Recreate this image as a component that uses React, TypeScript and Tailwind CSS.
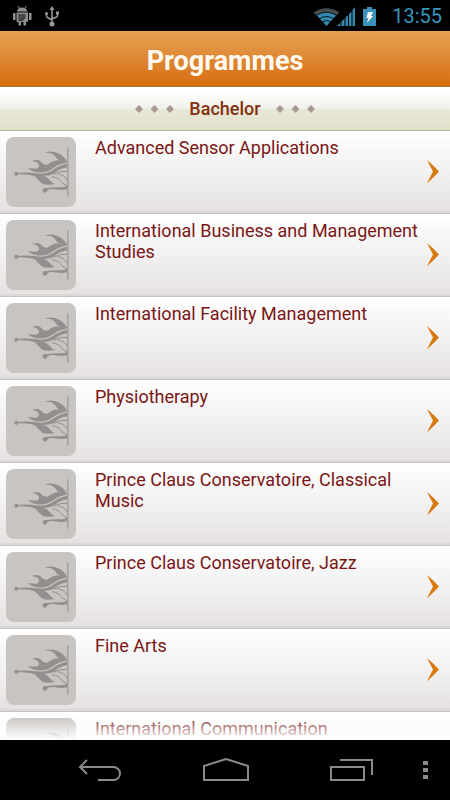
import React from "react";

const programmes = [
  "Advanced Sensor Applications",
  "International Business and Management Studies",
  "International Facility Management",
  "Physiotherapy",
  "Prince Claus Conservatoire, Classical Music",
  "Prince Claus Conservatoire, Jazz",
  "Fine Arts",
  "International Communication",
];

const StatusBar = () => (
  <div className="flex h-[31px] shrink-0 items-center justify-between bg-black pr-2 pl-3">
    <div className="flex items-center gap-3">
      <svg className="h-[22px] w-5" viewBox="0 0 20 22" fill="#8f8f8f">
        <path d="M5 6.500Q5.500 2.500 10 2.500T15.500 6.500ZM1 8h2.500v7H1ZM17 8h2.500v7H17ZM4.500 7.500h11.500v8q0 1.500-1.500 1.500H14v3.500h-2.500V17H9v3.500H6.500V17H6q-1.500 0-1.500-1.500Z" />
        <path d="m6 1 1.500 2M14.500 1 13 3" stroke="#8f8f8f" />
        <path d="M6.500 9h7v4l-3 3h-4Z" fill="#333" />
        <path d="M8 9.500v6M10 9.500v6M12 9.500v4" stroke="#8f8f8f" strokeDasharray="1 1" />
      </svg>
      <svg className="h-[22px] w-4" viewBox="0 0 16 22" fill="none" stroke="#9a9a9a" strokeWidth="1.500">
        <path d="M8 3v16M2.500 8.500V11q0 1 1 1.500L8 15M13.500 8v2.500q0 1-1 1.500L8 14" />
        <path d="m8 1 2.500 4h-5Z" fill="#9a9a9a" stroke="none" />
        <circle cx="8" cy="19" r="2.500" fill="#9a9a9a" stroke="none" />
        <circle cx="2.500" cy="8.500" r="1.500" fill="#9a9a9a" stroke="none" />
        <path d="M12 6.500h3v3h-3Z" fill="#9a9a9a" stroke="none" />
      </svg>
    </div>
    <div className="flex items-center">
      <svg className="h-[22px] w-[66px]" viewBox="0 -2 66 22">
        <path d="M0 5.500Q12.500-2.500 25 5.500L12.500 19Z" fill="#3488ad" />
        <path d="M0 5.500Q12.500-2.500 25 5.500L22.500 8.500Q12.500 2 2.500 8.500Z" fill="#4a4a4a" />
        <path d="M2 8.500Q12.500 2 23 8.500M5 12Q12.500 7 20 12M8 15Q12.500 12 17 15" fill="none" stroke="#071820" strokeWidth="1" />
        <path d="M23 19 26.500 15.500V19ZM27.500 19v-4.500l3-3V19ZM31.500 19v-8.500l2.500-2.500v11ZM35 19V7l2.500-2.500V19ZM38.500 19V3L41 0v19Z" fill="#3488ad" />
        <path d="M49 2h4V0h5v2h4v17H49Z" fill="#3b92b8" />
        <path d="M54 5h5l-2 4h2l-6 7 1.500-5H52.500Z" fill="#fff" />
      </svg>
      <time className="ml-3 text-xl leading-6 text-[#3796bd]">13:55</time>
    </div>
  </div>
);

const Dots = () => (
  <svg className="h-2 w-[39px]" viewBox="0 0 39 8" fill="#a89896">
    <path d="M4 0 8 4 4 8 0 4ZM19.500 0l4 4-4 4-4-4ZM35 0l4 4-4 4-4-4Z" />
  </svg>
);

const Leaf = () => (
  <svg className="size-[70px] shrink-0 rounded-lg bg-[#c7c4c1]" viewBox="0 0 210 210" fill="#928f8e">
    <path d="M184 31h3v148h-3Z" />
    {/* upper flames */}
    <path d="M115 48Q137 39 156 49Q174 57 184 75Q162 74 153 65Q144 51 133 48Q124 46 115 48Z" />
    <path d="M78 72Q98 65 106 75Q110 83 124 83Q145 68 162 70L184 76Q160 81 142 93Q120 110 92 106Q77 104 65 93Q82 95 91 95Q101 91 99 84Q95 74 78 72Z" />
    {/* main leaf, running out to the knob on the left */}
    <path d="M32 108Q60 104 90 109Q116 114 137 101Q159 84 184 80V91Q162 94 150 105Q134 118 112 116Q123 119 131 129Q138 139 148 141Q122 146 109 140Q97 130 89 120Q76 111 34 112Z" />
    <circle cx="31" cy="110" r="6" />
    {/* thin stalks */}
    <path d="M143 112Q163 100 184 103M155 110Q174 113 184 129M138 119Q160 122 168 137L184 148" fill="none" stroke="#928f8e" strokeWidth="3" />
    <path d="M117 154Q142 150 162 151Q176 151 184 146V157Q165 161 148 157Q133 154 123 160Z" />
    <circle cx="117" cy="160" r="7" />
  </svg>
);

const ProgrammeRow = ({ name }: { name: string }) => (
  <li>
    <a
      href="#"
      className="flex h-[83px] border-b border-[#c6c4c3] bg-linear-to-b from-white to-[#e5e1e1] pt-1.5 pr-[11px] pl-1.5 shadow-[inset_0_-2px_0_#dcd8d8]"
    >
      <Leaf />
      <span className="ml-[19px] flex-1 text-lg leading-[21px] text-[#7b1616]">{name}</span>
      <svg className="mt-[23px] h-6 w-3 shrink-0" viewBox="0 0 12 24" fill="#d8790f">
        <path d="M0 0Q7 6 12 11.500Q7 17 0 23.500Q3 17 6 11.500Q3 6 0 0Z" />
      </svg>
    </a>
  </li>
);

const NavBar = () => (
  <nav className="flex h-15 shrink-0 items-center bg-black pt-1 text-[#8b8b8b]">
    <button aria-label="Back" className="ml-[78px]">
      <svg className="h-7 w-11" viewBox="0 0 44 28" fill="none" stroke="currentColor" strokeWidth="2">
        <path d="m9 2-7 7 7 7M2 9h33.500a6 6 0 0 1 0 13H20" />
      </svg>
    </button>
    <button aria-label="Home" className="mx-auto">
      <svg className="h-7 w-12" viewBox="0 0 48 28" fill="none" stroke="currentColor" strokeWidth="2">
        <path d="M2 22V8L24 1l22 7v14Z" />
      </svg>
    </button>
    <button aria-label="Recent apps">
      <svg className="h-7 w-11" viewBox="0 0 44 28" fill="none" stroke="currentColor" strokeWidth="2">
        <path d="M1 9h33v13H1ZM10 2h32v15" />
      </svg>
    </button>
    <button aria-label="More options" className="mr-4 ml-11">
      <svg className="h-7 w-4" viewBox="0 0 16 28" fill="currentColor">
        <path d="M5 3h5v4H5ZM5 10h5v4H5ZM5 17h5v4H5Z" />
      </svg>
    </button>
  </nav>
);

export default function App() {
  return (
    <div className="flex h-screen flex-col overflow-hidden bg-white font-[Roboto,sans-serif]">
      <StatusBar />
      <header className="flex h-14 shrink-0 items-center justify-center border-b border-[#a97443] bg-linear-to-b from-[#e6a150] to-[#d66d08] pt-1">
        <h1 className="text-[27px] leading-8 font-bold text-[#fffaf0]">Programmes</h1>
      </header>
      <div className="flex h-11 shrink-0 items-center justify-center gap-[15px] border-b border-[#b4b3a4] bg-linear-[to_bottom,#fff_10%,#f0f0e9_52%,#e8e8d7_52%,#e0dfc9]">
        <Dots />
        <h2 className="text-lg leading-6 font-medium text-[#84300f]">Bachelor</h2>
        <Dots />
      </div>
      <main className="relative min-h-0 flex-1 overflow-hidden">
        <ul>
          {programmes.map((name) => (
            <ProgrammeRow key={name} name={name} />
          ))}
        </ul>
        <div className="pointer-events-none absolute inset-x-0 bottom-0 h-6 bg-linear-to-b from-transparent to-white" />
      </main>
      <NavBar />
    </div>
  );
}
